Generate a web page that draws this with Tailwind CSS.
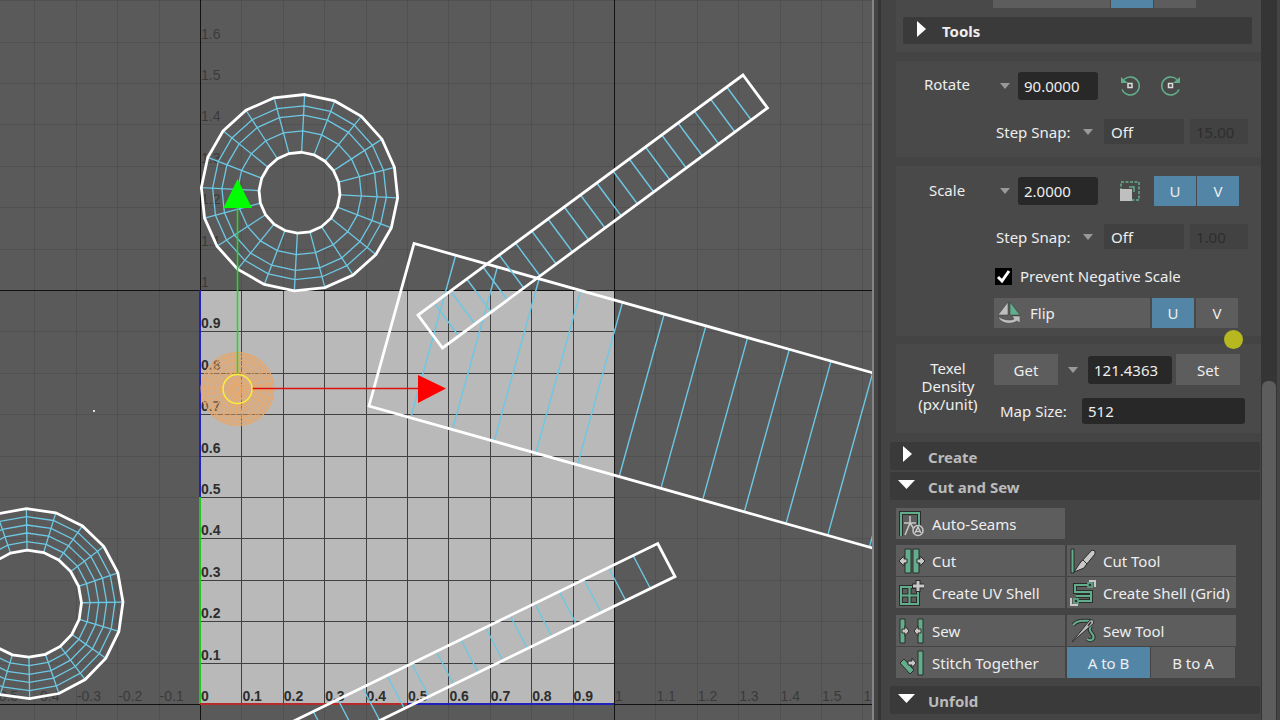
<!DOCTYPE html>
<html lang="en">
<head>
  <meta charset="UTF-8" />
  <meta name="viewport" content="width=device-width, initial-scale=1.0"/>
  <title>UV Editor</title>
  <script src="https://cdn.jsdelivr.net/npm/@tailwindcss/browser@4"></script>
</head>
<body class="flex h-screen overflow-hidden bg-[#444] font-['Noto_Sans',sans-serif] text-[15px] leading-5 text-[#eee]">

  <!-- UV canvas -->
  <main class="min-w-0 flex-1 bg-[#5a5a5a]">
    <svg id="canvas" class="block h-full w-full font-['Liberation_Sans',sans-serif] text-[14px]" role="img" aria-label="UV canvas">
      <rect x="200" y="290" width="414" height="414" fill="#b9b9b9"/>
      <g id="grid" shape-rendering="crispEdges"></g>
      <g id="labels"></g>
      <g id="shells" fill="none"></g>
      <rect x="93" y="410" width="2" height="2" fill="#ddd"/>
      <!-- move manipulator -->
      <path d="M237.5 374V206" stroke="#1be01b" stroke-width="1.5"/>
      <path d="M237.5 179L252 208H223.500Z" fill="#0f0"/>
      <path d="M252 388.500H420" stroke="#e01010" stroke-width="1.5"/>
      <path d="M418 375V403L446 388.500Z" fill="#f00"/>
      <circle cx="237.5" cy="389" r="14.5" fill="none" stroke="#fbee3a" stroke-width="1.5"/>
    </svg>
  </main>

  <!-- UV toolkit -->
  <aside class="relative flex w-[408px] shrink-0 border-l-2 border-[#858585]">
    <div class="ml-1 w-[3px] bg-[#353535]"></div>

    <div class="min-w-0 flex-1">
      <section class="ml-[15px] h-[52px] bg-[#494949]">
        <div class="ml-[97px] flex h-2 gap-px">
          <div class="w-[117px] bg-[#5d5d5d]"></div>
          <div class="w-[42px] bg-[#5285a6]"></div>
          <div class="w-[42px] bg-[#5d5d5d]"></div>
        </div>
        <button class="mx-[7px] mt-[9px] flex h-[27px] w-[349px] items-center rounded-xs bg-[#3a3a3a] pl-3.5 font-bold">
          <svg class="mb-1 h-4 w-[25px]" viewBox="0 0 25 16"><path d="M0 0L9 8L0 16Z" fill="#fff"/></svg>Tools
        </button>
      </section>

      <!-- Rotate -->
      <section class="mt-[9px] ml-[15px] flex h-24 bg-[#494949] pt-[11px]">
        <label for="rotate" class="h-7 w-[98px] pt-0.5 pl-1 text-center">Rotate</label>
        <div class="flex-1">
          <div class="flex h-7 items-center">
            <button class="flex w-6 justify-center" aria-label="Rotate presets"><svg class="mr-0.5" width="10" height="6"><path d="M0 0H10L5 6Z" fill="#999"/></svg></button>
            <input id="rotate" value="90.0000" class="h-7 w-20 rounded-[3px] bg-[#282828] px-1.5">
            <button class="ml-[22px]" aria-label="Rotate counterclockwise">
              <svg width="21" height="22" viewBox="0 0 21 22" fill="none"><path d="M4 4.500A9 9 0 1 1 2 14.500" stroke="#62ae8c" stroke-width="1.5"/><path d="M1 2V8H8Z" fill="#62ae8c"/><rect x="8" y="8.500" width="4" height="4" stroke="#ddd" stroke-width="1.5"/></svg>
            </button>
            <button class="ml-[19px]" aria-label="Rotate clockwise">
              <svg width="21" height="22" viewBox="0 0 21 22" fill="none"><path d="M17 4.500A9 9 0 1 0 19 14.500" stroke="#62ae8c" stroke-width="1.5"/><path d="M20 2V8H13Z" fill="#62ae8c"/><rect x="8.500" y="8.500" width="4" height="4" stroke="#ddd" stroke-width="1.5"/></svg>
            </button>
          </div>
          <div class="mt-[19px] flex h-[25px] items-center">
            <label for="rotate-snap" class="w-[82px] pl-0.5">Step Snap:</label>
            <svg class="mx-[7px]" width="10" height="6"><path d="M0 0H10L5 6Z" fill="#999"/></svg>
            <select id="rotate-snap" class="ml-1 h-full w-20 appearance-none bg-[#404040] px-[7px]"><option>Off</option></select>
            <input value="15.00" disabled aria-label="Rotate step" class="ml-1.5 h-full w-[58px] bg-[#424242] px-1.5 text-[#2e2e2e]">
          </div>
        </div>
      </section>

      <!-- Scale -->
      <section class="mt-[9px] ml-[15px] flex h-[170px] bg-[#494949] pt-[10px]">
        <label for="scale" class="h-7 w-[98px] pt-1 pl-1 text-center">Scale</label>
        <div class="flex-1">
          <div class="flex h-[30px] items-center">
            <button class="flex w-6 justify-center" aria-label="Scale presets"><svg class="mr-0.5" width="10" height="6"><path d="M0 0H10L5 6Z" fill="#999"/></svg></button>
            <input id="scale" value="2.0000" class="h-7 w-20 rounded-[3px] bg-[#282828] px-1.5">
            <button class="mr-3.5 ml-[22px]" aria-label="Scale UVs">
              <svg width="20" height="20" viewBox="0 0 20 20" fill="none"><rect x="1" y="1" width="18" height="18" stroke="#62ae8c" stroke-width="1.5" stroke-dasharray="3 1.5"/><rect y="8" width="12" height="12" fill="#bfbfbf"/><path d="M9 6H14V11" stroke="#62ae8c" stroke-width="1.5"/></svg>
            </button>
            <button class="h-full w-[42px] bg-[#5285a6]">U</button>
            <button class="ml-px h-full w-[42px] bg-[#5285a6]">V</button>
          </div>
          <div class="mt-[18px] flex h-[25px] items-center">
            <label for="scale-snap" class="w-[82px] pl-0.5">Step Snap:</label>
            <svg class="mx-[7px]" width="10" height="6"><path d="M0 0H10L5 6Z" fill="#999"/></svg>
            <select id="scale-snap" class="ml-1 h-full w-20 appearance-none bg-[#404040] px-[7px]"><option>Off</option></select>
            <input value="1.00" disabled aria-label="Scale step" class="ml-1.5 h-full w-[58px] bg-[#424242] px-1.5 text-[#2e2e2e]">
          </div>
          <label class="mt-[17px] flex h-5 items-center">
            <span class="relative ml-px flex size-[17px]">
              <input type="checkbox" checked class="size-[17px] appearance-none bg-black">
              <svg class="pointer-events-none absolute inset-0" width="17" height="17" fill="none"><path d="M3 9L7 13L14 3" stroke="#fff" stroke-width="3"/></svg>
            </span>
            <span class="ml-2">Prevent Negative Scale</span>
          </label>
          <div class="mt-3 flex h-[30px]">
            <button class="flex w-[156px] items-center gap-2.5 bg-[#5d5d5d] pl-1">
              <svg width="22" height="24" viewBox="0 0 22 24" stroke="#333" stroke-width="0.5"><path d="M10 1V14H0Z" fill="#bfbfbf"/><path d="M12 1V14H22Z" fill="#62ae8c"/><path d="M0 15C4 19 13 20 16 18L14 15H22V22L19 20C13 24 2 23 0 15Z" fill="#bfbfbf"/></svg>Flip
            </button>
            <button class="ml-0.5 w-[42px] bg-[#5285a6]">U</button>
            <button class="ml-0.5 w-[42px] bg-[#5d5d5d]">V</button>
          </div>
        </div>
      </section>

      <!-- Texel density -->
      <section class="mt-2 ml-[15px] flex h-[89px] bg-[#494949] pt-[10px]">
        <label for="density" class="w-[98px] pt-[5px] pl-1.5 text-center leading-[18px]">Texel<br>Density<br>(px/unit)</label>
        <div class="flex-1">
          <div class="flex h-[31px] items-center">
            <button class="h-full w-16 bg-[#5d5d5d]">Get</button>
            <svg class="mx-2.5" width="10" height="6"><path d="M0 0H10L5 6Z" fill="#999"/></svg>
            <input id="density" value="121.4363" class="h-7 w-[84px] rounded-[3px] bg-[#282828] px-1.5">
            <button class="ml-1 h-full w-16 bg-[#5d5d5d]">Set</button>
          </div>
          <div class="mt-[13px] flex h-[26px] items-center">
            <label for="map-size" class="w-[88px] pl-1.5">Map Size:</label>
            <input id="map-size" value="512" class="h-full w-[163px] rounded-[3px] bg-[#282828] px-1.5">
          </div>
        </div>
      </section>

      <button class="mt-[9px] ml-[9px] flex h-7 w-[370px] items-center rounded-xs bg-[#3a3a3a] pt-0.5 pl-3 font-bold text-[#bbb]">
        <svg class="mb-1.5 h-4 w-[26px]" viewBox="0 0 26 16"><path d="M1 0L10 8L1 16Z" fill="#fff"/></svg>Create
      </button>
      <button class="mt-0.5 ml-[9px] flex h-7 w-[370px] items-center rounded-xs bg-[#3a3a3a] pt-0.5 pl-2 font-bold text-[#bbb]">
        <svg class="mb-1.5 h-[9px] w-[30px]" viewBox="0 0 30 9"><path d="M0 0H17L8.500 9Z" fill="#fff"/></svg>Cut and Sew
      </button>

      <!-- Cut and Sew -->
      <div class="mt-2 ml-[15px] grid w-[340px] grid-cols-2 gap-x-0.5 gap-y-px">
        <button class="mb-[5px] flex h-[31px] items-center gap-[7px] bg-[#5d5d5d] pt-px pl-[3px]">
          <svg width="26" height="26" viewBox="0 0 26 26" fill="none"><path d="M2 25V2H20V14" stroke="#2c2c2c" stroke-width="4"/><path d="M2 25V2H20V14" stroke="#62ae8c" stroke-width="2"/><path d="M5 12H17M11 5V12L6 24M11 12L15 18" stroke="#c8c8c8" stroke-width="1.5"/><circle cx="19" cy="19.500" r="5" fill="#555" stroke="#c8c8c8" stroke-width="1.5"/><path d="M16 22L19 16L22 22M17 20.500H21" stroke="#c8c8c8" stroke-width="1.5"/></svg>Auto-Seams
        </button>
        <span></span>

        <button class="flex h-[31px] items-center gap-[7px] bg-[#5d5d5d] pt-px pl-[3px]">
          <svg width="26" height="26" viewBox="0 0 26 26" stroke="#2c2c2c"><path d="M6 1H12V25H6ZM14 1H20V25H14Z" fill="#62ae8c"/><path d="M0 13L5 8V11H8V15H5V18ZM26 13L21 8V11H18V15H21V18Z" fill="#c8c8c8"/></svg>Cut
        </button>
        <button class="flex h-[31px] items-center gap-[7px] bg-[#5d5d5d] pt-px pl-[3px]">
          <svg width="26" height="26" viewBox="0 0 26 26"><path d="M1 1H4V25H1Z" fill="#62ae8c" stroke="#2c2c2c"/><path d="M4 24L10 15L22 2L25 3V6L16 17L14 20Z" fill="#c8c8c8" stroke="#2c2c2c"/><path d="M13 12L17 16" stroke="#2c2c2c"/></svg>Cut Tool
        </button>

        <button class="flex h-[31px] items-center gap-[7px] bg-[#5d5d5d] pt-px pl-[3px]">
          <svg width="26" height="26" viewBox="0 0 26 26" fill="none"><path d="M2 7H19V24H2ZM2 15.500H19M10.500 7V24" stroke="#2c2c2c" stroke-width="4"/><path d="M2 7H19V24H2ZM2 15.500H19M10.500 7V24" stroke="#62ae8c" stroke-width="2"/><path d="M19 0V12M13 6H25" stroke="#2c2c2c" stroke-width="5"/><path d="M19 1V11M14 6H25" stroke="#c8c8c8" stroke-width="3"/></svg>Create UV Shell
        </button>
        <button class="flex h-[31px] items-center gap-[7px] bg-[#5d5d5d] pt-px pl-[3px] whitespace-nowrap">
          <svg width="26" height="26" viewBox="0 0 26 26" fill="none"><path d="M20 5H5V12H21V21H6M6 16H21" stroke="#2c2c2c" stroke-width="4"/><path d="M20 5H5V12H21V21H6M6 16H21" stroke="#62ae8c" stroke-width="2"/><path d="M18 3H22V7H18ZM4 19H8V23H4Z" fill="#333" stroke="#62ae8c" stroke-width="1.5"/><path d="M19 1H25V7M1 18V25H8" stroke="#c8c8c8" stroke-width="2"/></svg>Create Shell (Grid)
        </button>

        <button class="mt-1.5 flex h-[31px] items-center gap-[7px] bg-[#5d5d5d] pt-px pl-[3px]">
          <svg width="26" height="26" viewBox="0 0 26 26" stroke="#2c2c2c"><path d="M1 1H6V25H1ZM19 1H24V25H19Z" fill="#62ae8c"/><path d="M10 13L6 8V11H3V15H6V18ZM15 13L19 8V11H22V15H19V18Z" fill="#c8c8c8"/></svg>Sew
        </button>
        <button class="mt-1.5 flex h-[31px] items-center gap-[7px] bg-[#5d5d5d] pt-px pl-[3px]">
          <svg width="26" height="26" viewBox="0 0 26 26" fill="none"><path d="M3 7C8 1 15 3 21 3M21 8C18 12 21 14 23 17C25 21 21 24 17 21" stroke="#2c2c2c" stroke-width="4"/><path d="M3 7C8 1 15 3 21 3M21 8C18 12 21 14 23 17C25 21 21 24 17 21" stroke="#62ae8c" stroke-width="2"/><path d="M2 24L19 3C22 0 25 3 23 6Z" fill="#b8b8b8" stroke="#2c2c2c"/><path d="M18 8L21 4" stroke="#333" stroke-width="1.5"/></svg>Sew Tool
        </button>

        <button class="flex h-[31px] items-center gap-[7px] bg-[#5d5d5d] pt-px pl-[3px] whitespace-nowrap">
          <svg width="26" height="26" viewBox="0 0 26 26" stroke="#2c2c2c"><path d="M19 1H24V25H19ZM1 13L5 9L15 20L11 24Z" fill="#62ae8c"/><path d="M17 13L13 8V11H9V15H13V18Z" fill="#c8c8c8"/></svg>Stitch Together
        </button>
        <div class="flex h-[31px] gap-px">
          <button class="w-[83px] bg-[#5285a6]">A to B</button>
          <button class="w-[84px] bg-[#5d5d5d]">B to A</button>
        </div>
      </div>

      <button class="mt-2 ml-[9px] flex h-7 w-[370px] items-center rounded-xs bg-[#3a3a3a] pt-0.5 pl-2 font-bold text-[#bbb]">
        <svg class="mb-1.5 h-[9px] w-[30px]" viewBox="0 0 30 9"><path d="M0 0H17L8.500 9Z" fill="#fff"/></svg>Unfold
      </button>
    </div>

    <!-- scrollbar -->
    <div class="mr-[3px] flex w-4 flex-col bg-[#353535] px-px">
      <div class="mt-[381px] flex-1 rounded-t-md bg-[#5d5d5d]"></div>
    </div>

    <!-- click marker -->
    <div class="absolute top-[330px] right-[37px] size-[19px] rounded-full bg-[#b7b71f]"></div>
  </aside>

  <script>
    const X0 = 200, Y0 = 704, STEP = 41.4;
    const grid = document.getElementById("grid");
    const labels = document.getElementById("labels");
    const shells = document.getElementById("shells");

    function line(parent, x1, y1, x2, y2, color, width = 1) {
      parent.innerHTML += `<line x1="${x1}" y1="${y1}" x2="${x2}" y2="${y2}" stroke="${color}" stroke-width="${width}"/>`;
    }

    function label(x, y, value) {
      const inside = x < 612 && x >= 200 && y > 292;
      labels.innerHTML += `<text x="${x}" y="${y}" fill="${inside ? "#2e2e2e" : "#3a3a3a"}" font-weight="${inside ? 700 : 400}">${value}</text>`;
    }

    // faint grid over the whole canvas, darker in the 0-1 tile
    for (let i = -5; i <= 50; i++) {
      const x = Math.round(X0 + i * STEP) + 0.5;
      line(grid, x, 0, x, 3000, "#515151");
    }
    for (let i = -50; i <= 17; i++) {
      const y = Math.round(Y0 - i * STEP) + 0.5;
      line(grid, 0, y, 5000, y, "#515151");
    }
    for (let i = 1; i < 10; i++) {
      const x = Math.round(X0 + i * STEP) + 0.5;
      const y = Math.round(Y0 - i * STEP) + 0.5;
      line(grid, x, 290, x, 704, "#404040");
      line(grid, 200, y, 614, y, "#404040");
    }
    line(grid, 0, 290.5, 5000, 290.5, "#111");
    line(grid, 0, 704.5, 5000, 704.5, "#111");
    line(grid, 200.5, 0, 200.5, 3000, "#111");
    line(grid, 614.5, 0, 614.5, 3000, "#111");
    line(grid, 200, 290, 200, 497, "#2222b8", 2);
    line(grid, 200, 497, 200, 704, "#22c822", 2);
    line(grid, 200, 704, 407, 704, "#b82a2a", 2);
    line(grid, 407, 704, 614, 704, "#2222b8", 2);

    for (let i = -5; i <= 16; i++) {
      label(X0 + i * STEP + 1, Y0 - 3, +(i / 10).toFixed(1));
      if (i > 0) label(X0 + 1, Y0 - i * STEP - 3, +(i / 10).toFixed(1));
    }

    function ringPoints(cx, cy, r, start, n) {
      return Array.from({ length: n }, (_, i) => {
        const a = (start + i * 360 / n) * Math.PI / 180;
        return [cx + r * Math.sin(a), cy - r * Math.cos(a)];
      });
    }

    function ring(cx, cy, radii, start, edge, border, n = 20) {
      const all = radii.map(r => ringPoints(cx, cy, r, start, n));
      const last = all.length - 1;
      const thin = border === edge ? 1 : 1.3;
      for (let i = 0; i < n; i++) line(shells, ...all[0][i], ...all[last][i], edge, thin);
      // inner loops first so the borders stay on top
      for (let i = 1; i < last; i++) {
        shells.innerHTML += `<polygon points="${all[i].join(" ")}" stroke="${edge}" stroke-width="${thin}"/>`;
      }
      for (const pts of [all[0], all[last]]) {
        shells.innerHTML += `<polygon points="${pts.join(" ")}" stroke="${border}" stroke-width="${border === edge ? 1 : 2.8}"/>`;
      }
    }

    // strip of quads: a and b are the two end corners, (dx, dy) is one quad
    function strip(a, b, dx, dy, n) {
      for (let i = 1; i < n; i++) line(shells, a[0] + dx * i, a[1] + dy * i, b[0] + dx * i, b[1] + dy * i, "#6cc8e4", 1.4);
      const pts = [a, b, [b[0] + dx * n, b[1] + dy * n], [a[0] + dx * n, a[1] + dy * n]];
      shells.innerHTML += `<polygon points="${pts.join(" ")}" stroke="#fff" stroke-width="2.8"/>`;
    }

    ring(299.5, 192.7, [98.3, 87, 77.7, 62, 40.5], 3, "#6cc8e4", "#fff");
    ring(28, 603.7, [95, 87, 78.7, 70.7, 62, 53.5], -1, "#6cc8e4", "#fff");
    strip([414, 243.5], [369, 406], 41.7, 11.76, 24);
    strip([743, 75], [767.5, 108], -16.25, 12, 20);
    strip([657.7, 543.5], [675, 576.5], -24.6, 12, 20);

    // selected shell
    shells.innerHTML += `<circle cx="237.5" cy="389" r="37" fill="#e8a564" fill-opacity="0.45"/>`;
    ring(237.5, 389, [36.5, 33, 29, 23, 17, 10, 3], 3, "#eba868", "#eba868", 28);
  </script>
</body>
</html>
